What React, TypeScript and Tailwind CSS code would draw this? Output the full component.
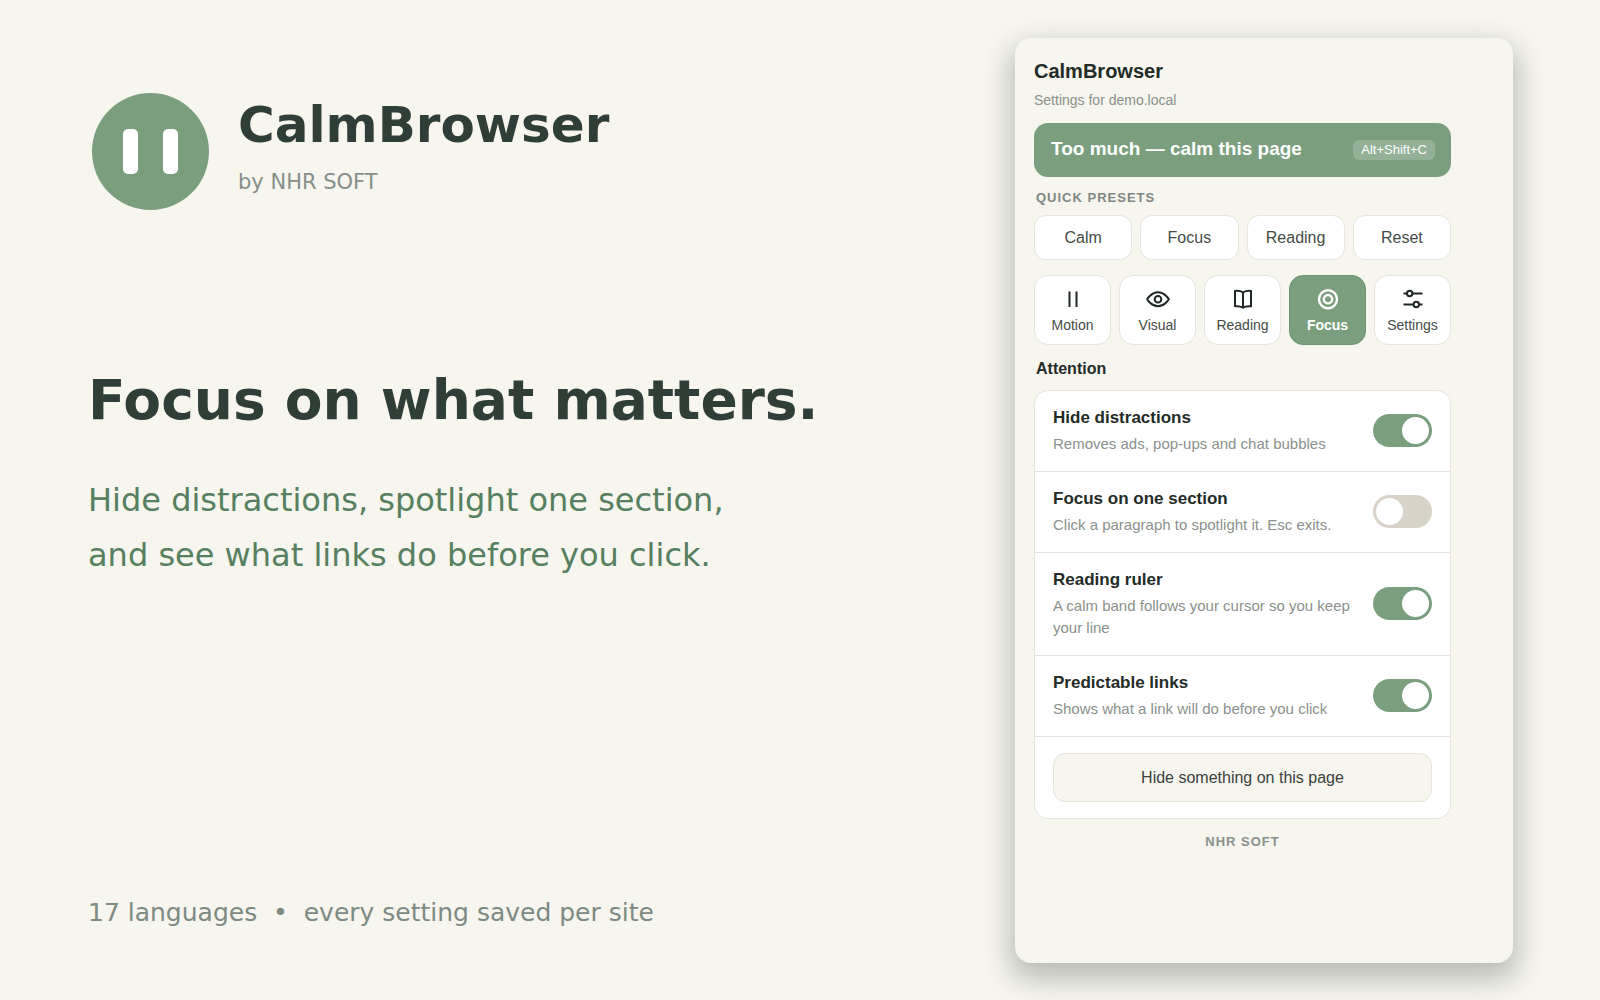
import React, { useState } from 'react';

const PRESETS = ['Calm', 'Focus', 'Reading', 'Reset'];

const TABS = [
  {
    label: 'Motion',
    icon: <path d="M8.500 4.500v15.500M15.500 4.500v15.500" />,
  },
  {
    label: 'Visual',
    icon: (
      <>
        <path d="M1.200 12.200S5.200 5.200 12 5.200s10.800 7 10.800 7-4 7-10.800 7S1.200 12.200 1.200 12.200z" />
        <circle cx="12" cy="12.200" r="3.300" />
      </>
    ),
  },
  {
    label: 'Reading',
    icon: <path d="M12 5.500C10 4.200 7 3.600 4 4v15.300c3-.4 6 0 8 1.500 2-1.500 5-1.900 8-1.500V4c-3-.4-6 .2-8 1.500zM12 5.500v15.300" />,
  },
  {
    label: 'Focus',
    icon: (
      <>
        <circle cx="12" cy="12.200" r="9" />
        <circle cx="12" cy="12.200" r="4.200" />
      </>
    ),
  },
  {
    label: 'Settings',
    icon: (
      <>
        <path d="M2.500 6.500h3.500M11.500 6.500h10M2.500 17.500h10M18 17.500h3.500" />
        <circle cx="8.700" cy="6.500" r="2.700" />
        <circle cx="15.300" cy="17.500" r="2.700" />
      </>
    ),
  },
];

const OPTIONS = [
  { id: 'hide', title: 'Hide distractions', text: 'Removes ads, pop-ups and chat bubbles', on: true },
  { id: 'section', title: 'Focus on one section', text: 'Click a paragraph to spotlight it. Esc exits.', on: false },
  { id: 'ruler', title: 'Reading ruler', text: 'A calm band follows your cursor so you keep your line', on: true },
  { id: 'links', title: 'Predictable links', text: 'Shows what a link will do before you click', on: true },
];

const Popup: React.FC = () => {
  const [tab, setTab] = useState('Focus');

  return (
    <aside className="w-[498px] shrink-0 rounded-2xl bg-[#f6f5ee] pl-[19px] pr-[62px] pt-[21px] pb-8 font-['Liberation_Sans',sans-serif] text-[#232b27] shadow-[0_12px_28px_4px_rgba(30,40,34,0.28)]">
      <h2 className="text-[20px] leading-6 font-bold">CalmBrowser</h2>
      <p className="mt-[7px] text-[14px] leading-5 text-[#8a918b]">Settings for demo.local</p>

      <button className="mt-[13px] flex h-[54px] w-full items-center justify-between rounded-[14px] bg-[#7a9e7e] pl-[17px] pr-4 text-white">
        <span className="pb-0.5 text-[19px] leading-6 font-bold">Too much — calm this page</span>
        <kbd className="rounded-md bg-white/20 px-2 font-['Liberation_Sans',sans-serif] text-[13px] leading-5">Alt+Shift+C</kbd>
      </button>

      <h3 className="mt-[13px] pl-0.5 text-[13px] leading-4 font-bold tracking-[1px] text-[#808781]">QUICK PRESETS</h3>
      <div className="mt-[9px] grid grid-cols-4 gap-2">
        {PRESETS.map(preset => (
          <button key={preset} className="h-[45px] rounded-xl border border-[#e6e4dc] bg-white text-[16px] text-[#444c47]">
            {preset}
          </button>
        ))}
      </div>

      <div className="mt-[15px] grid grid-cols-5 gap-2">
        {TABS.map(({ label, icon }) => (
          <button
            key={label}
            onClick={() => setTab(label)}
            className={`flex h-[70px] flex-col items-center justify-center gap-[5px] rounded-[14px] border text-[14px] leading-[18px] ${tab === label ? 'border-[#6f9474] bg-[#7a9e7e] font-bold text-white' : 'border-[#e6e4dc] bg-white text-[#444c47]'}`}
          >
            <svg
              viewBox="0 0 24 24"
              className={`size-6 ${tab === label ? 'text-white' : 'text-[#1f2723]'}`}
              fill="none"
              stroke="currentColor"
              strokeWidth={tab === label ? 2.4 : 2}
              strokeLinejoin="round"
            >
              {icon}
            </svg>
            {label}
          </button>
        ))}
      </div>

      <h3 className="mt-3.5 pl-0.5 text-[16px] leading-5 font-bold">Attention</h3>
      <div className="mt-[11px] rounded-[14px] border border-[#e6e4dc] bg-white">
        {OPTIONS.map(option => (
          <div key={option.id} className="flex items-center justify-between gap-4 border-b border-[#e6e4dc] px-[18px] pt-[15px] pb-4">
            <label htmlFor={option.id} className="flex flex-col gap-[3px]">
              <span className="text-[17px] leading-6 font-bold">{option.title}</span>
              <span className="text-[15px] leading-[22px] text-[#8a918b]">{option.text}</span>
            </label>
            <input
              id={option.id}
              type="checkbox"
              defaultChecked={option.on}
              className="flex h-[33px] w-[59px] shrink-0 appearance-none items-center rounded-full bg-[#d8d3c8] px-[3px] before:size-[27px] before:rounded-full before:bg-white before:content-[''] checked:justify-end checked:bg-[#7a9e7e]"
            />
          </div>
        ))}
        <div className="px-[18px] py-4">
          <button className="h-[49px] w-full rounded-xl border border-[#e6e4dc] bg-[#f6f5ee] text-[16px] text-[#3a423d]">
            Hide something on this page
          </button>
        </div>
      </div>

      <p className="mt-[15px] text-center text-[13px] leading-4 font-bold tracking-[1px] text-[#8a918b]">NHR SOFT</p>
    </aside>
  );
};

const App: React.FC = () => {
  return (
    <div className="flex min-h-screen justify-between bg-[#f6f5ee] pt-[38px] pr-[87px] pb-[37px] pl-[88px] font-['DejaVu_Sans',sans-serif]">
      <main className="flex flex-1 flex-col pt-[55px] pb-[35px]">
        <header className="flex gap-[29px] pl-1">
          <div className="flex size-[117px] shrink-0 items-center justify-center gap-[25px] rounded-full bg-[#7a9e7e]">
            <span className="h-[45px] w-[15px] rounded-[5px] bg-white"></span>
            <span className="h-[45px] w-[15px] rounded-[5px] bg-white"></span>
          </div>
          <div className="pt-0.5">
            <h1 className="text-[50px] leading-[60px] font-bold text-[#2f3e36]">CalmBrowser</h1>
            <p className="mt-[13px] text-[21px] leading-7 text-[#868f88]">by NHR SOFT</p>
          </div>
        </header>

        <section className="mt-[158px]">
          <h2 className="text-[55px] leading-[64px] font-bold text-[#2f3e36]">Focus on what matters.</h2>
          <p className="mt-[41px] text-[32px] leading-[55px] text-[#56805f]">
            Hide distractions, spotlight one section,
            <br />
            and see what links do before you click.
          </p>
        </section>

        <footer className="mt-auto text-[25px] leading-[30px] whitespace-pre text-[#7d8a81]">{'17 languages  •  every setting saved per site'}</footer>
      </main>

      <Popup />
    </div>
  );
};

export default App;
